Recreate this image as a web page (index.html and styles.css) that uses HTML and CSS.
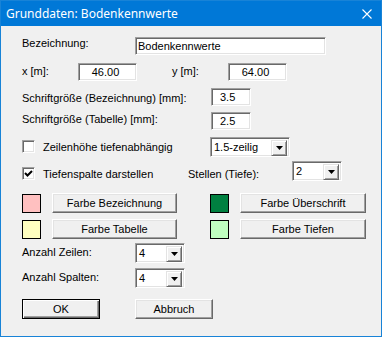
FILE: index.html
```html
<!DOCTYPE html>
<html lang="de">
<head>
    <meta charset="UTF-8">
    <title>Grunddaten: Bodenkennwerte</title>
    <link rel="stylesheet" href="styles.css">
</head>
<body>
    <div class="window">
        <div class="titlebar">
            <span class="title">Grunddaten: Bodenkennwerte</span>
            <svg class="close" width="10" height="10" viewBox="0 0 10 10">
                <path d="M0.5 0.5 L9.5 9.5 M9.5 0.5 L0.5 9.5" stroke="#fff" stroke-width="1.1" fill="none"/>
            </svg>
        </div>
        <div class="client">
            <div class="row r-name">
                <span class="label w113">Bezeichnung:</span>
                <div class="field w191">Bodenkennwerte</div>
            </div>
            <div class="row r-xy">
                <span class="label w56 off2">x [m]:</span>
                <div class="field num w59">46.00</div>
                <span class="label w56 off2 gap35">y [m]:</span>
                <div class="field num w59">64.00</div>
            </div>
            <div class="row r-size1">
                <span class="label w189 off4">Schriftgröße (Bezeichnung) [mm]:</span>
                <div class="field w40 pad7">3.5</div>
            </div>
            <div class="row r-size2">
                <span class="label w189 off1">Schriftgröße (Tabelle) [mm]:</span>
                <div class="field w40 pad7">2.5</div>
            </div>
            <div class="row r-zeilen">
                <span class="check off3"></span>
                <span class="label w167 off4">Zeilenhöhe tiefenabhängig</span>
                <div class="combo w80">
                    <span class="combo-text">1.5-zeilig</span>
                    <span class="combo-btn"><svg width="7" height="4" viewBox="0 0 7 4"><path d="M0 0 H7 L3.5 4 Z" fill="#000"/></svg></span>
                </div>
            </div>
            <div class="row r-tiefe">
                <span class="check off6">
                    <svg width="9" height="9" viewBox="0 0 9 9"><path d="M1 4 L3.5 6.5 L8 2" stroke="#000" stroke-width="2" fill="none"/></svg>
                </span>
                <span class="label w145 off7">Tiefenspalte darstellen</span>
                <span class="label w104 off7">Stellen (Tiefe):</span>
                <div class="combo w50">
                    <span class="combo-text">2</span>
                    <span class="combo-btn"><svg width="7" height="4" viewBox="0 0 7 4"><path d="M0 0 H7 L3.5 4 Z" fill="#000"/></svg></span>
                </div>
            </div>
            <div class="row r-color1">
                <span class="swatch pink"></span>
                <button class="btn w125">Farbe Bezeichnung</button>
                <span class="swatch green gap33"></span>
                <button class="btn w126">Farbe Überschrift</button>
            </div>
            <div class="row r-color2">
                <span class="swatch yellow"></span>
                <button class="btn w125">Farbe Tabelle</button>
                <span class="swatch lightgreen gap33"></span>
                <button class="btn w126">Farbe Tiefen</button>
            </div>
            <div class="row r-rows">
                <span class="label w113 off3">Anzahl Zeilen:</span>
                <div class="combo w50">
                    <span class="combo-text">4</span>
                    <span class="combo-btn"><svg width="7" height="4" viewBox="0 0 7 4"><path d="M0 0 H7 L3.5 4 Z" fill="#000"/></svg></span>
                </div>
            </div>
            <div class="row r-cols">
                <span class="label w113 off3">Anzahl Spalten:</span>
                <div class="combo w50">
                    <span class="combo-text">4</span>
                    <span class="combo-btn"><svg width="7" height="4" viewBox="0 0 7 4"><path d="M0 0 H7 L3.5 4 Z" fill="#000"/></svg></span>
                </div>
            </div>
            <div class="row r-buttons">
                <button class="btn default w78">OK</button>
                <button class="btn w78 gap35">Abbruch</button>
            </div>
        </div>
    </div>
</body>
</html>
```

FILE: styles.css
```css
body {
    margin: 0;
    background: #ffffff;
    font-family: "Liberation Sans", Arial, sans-serif;
    font-size: 11px;
    color: #000;
}
.window {
    width: 380px;
    height: 335px;
    border: 1px solid #1883d7;
    background: #f0f0f0;
    display: flex;
    flex-direction: column;
}
.titlebar {
    height: 25px;
    flex: none;
    background: #0078d7;
    display: flex;
    align-items: center;
    justify-content: space-between;
    padding: 0 9px 0 5px;
}
.title {
    font-family: "Noto Sans", sans-serif;
    font-size: 12px;
    color: #fff;
    margin-top: -1px;
}
.close {
    display: block;
}
.client {
    padding: 11px 0 0 21px;
}
.row {
    display: flex;
    align-items: flex-start;
    height: 20px;
}
.r-name { height: 18px; }
.r-xy { height: 18px; margin-top: 8px; }
.r-size1 { height: 18px; margin-top: 7px; }
.r-size2 { height: 18px; margin-top: 6px; }
.r-zeilen { margin-top: 7px; }
.r-tiefe { margin-top: 4px; }
.r-color1 { margin-top: 12px; }
.r-color2 { margin-top: 6px; }
.r-rows { margin-top: 4px; }
.r-cols { margin-top: 5px; }
.r-buttons { margin-top: 11px; }

.label {
    line-height: 13px;
    white-space: nowrap;
    flex: none;
}
.off1 { margin-top: 1px; }
.off2 { margin-top: 2px; }
.off3 { margin-top: 3px; }
.off4 { margin-top: 4px; }
.off6 { margin-top: 6px; }
.off7 { margin-top: 7px; }
.gap33 { margin-left: 33px; }
.gap35 { margin-left: 35px; }

.w40 { width: 40px; }
.w50 { width: 50px; }
.w56 { width: 56px; }
.w59 { width: 59px; }
.w78 { width: 78px; }
.w80 { width: 80px; }
.w104 { width: 104px; }
.w113 { width: 113px; }
.w125 { width: 125px; }
.w126 { width: 126px; }
.w145 { width: 145px; }
.w167 { width: 167px; }
.w189 { width: 189px; }
.w191 { width: 191px; }

/* sunken edit field */
.field {
    box-sizing: border-box;
    height: 18px;
    background: #fff;
    border: 1px solid;
    border-color: #a0a0a0 #fff #fff #a0a0a0;
    box-shadow: inset 1px 1px #696969, inset -1px -1px #e3e3e3;
    padding: 2px 2px 0 2px;
    line-height: 13px;
    white-space: nowrap;
    flex: none;
}
.field.num {
    text-align: center;
    padding-right: 6px;
}
.pad7 { padding-left: 8px; }

.check {
    box-sizing: border-box;
    width: 13px;
    height: 13px;
    flex: none;
    background: #fff;
    border: 1px solid;
    border-color: #a0a0a0 #fff #fff #a0a0a0;
    box-shadow: inset 1px 1px #696969, inset -1px -1px #e3e3e3;
    margin-right: 8px;
    display: flex;
    align-items: center;
    justify-content: center;
}
.check svg { display: block; }

/* combo box */
.combo {
    box-sizing: border-box;
    height: 20px;
    flex: none;
    background: #fff;
    border: 1px solid;
    border-color: #a0a0a0 #fff #fff #a0a0a0;
    box-shadow: inset 1px 1px #696969, inset -1px -1px #e3e3e3;
    padding: 2px;
    display: flex;
    justify-content: space-between;
}
.combo-text {
    line-height: 15px;
    padding-left: 1px;
}
.combo-btn {
    box-sizing: border-box;
    width: 16px;
    height: 16px;
    background: #f0f0f0;
    border: 1px solid;
    border-color: #e3e3e3 #696969 #696969 #e3e3e3;
    box-shadow: inset 1px 1px #fff, inset -1px -1px #a0a0a0;
    display: flex;
    align-items: center;
    justify-content: center;
}
.combo-btn svg { display: block; }

.swatch {
    box-sizing: border-box;
    width: 19px;
    height: 19px;
    flex: none;
    border: 1px solid #000;
    margin-top: 1px;
    margin-right: 11px;
}
.pink { background: #ffc0c0; }
.yellow { background: #ffffc0; }
.green { background: #008040; }
.lightgreen { background: #c0ffc0; }

.btn {
    box-sizing: border-box;
    height: 20px;
    flex: none;
    padding: 0;
    font-family: inherit;
    font-size: 11px;
    color: #000;
    background: #f0f0f0;
    border: 1px solid;
    border-color: #fff #696969 #696969 #fff;
    box-shadow: inset -1px -1px #a0a0a0, inset 1px 1px #e3e3e3;
    line-height: 16px;
}
.btn.default {
    border: 1px solid #000;
    box-shadow: inset 1px 1px #fff, inset -1px -1px #696969, inset -2px -2px #a0a0a0;
}
```
